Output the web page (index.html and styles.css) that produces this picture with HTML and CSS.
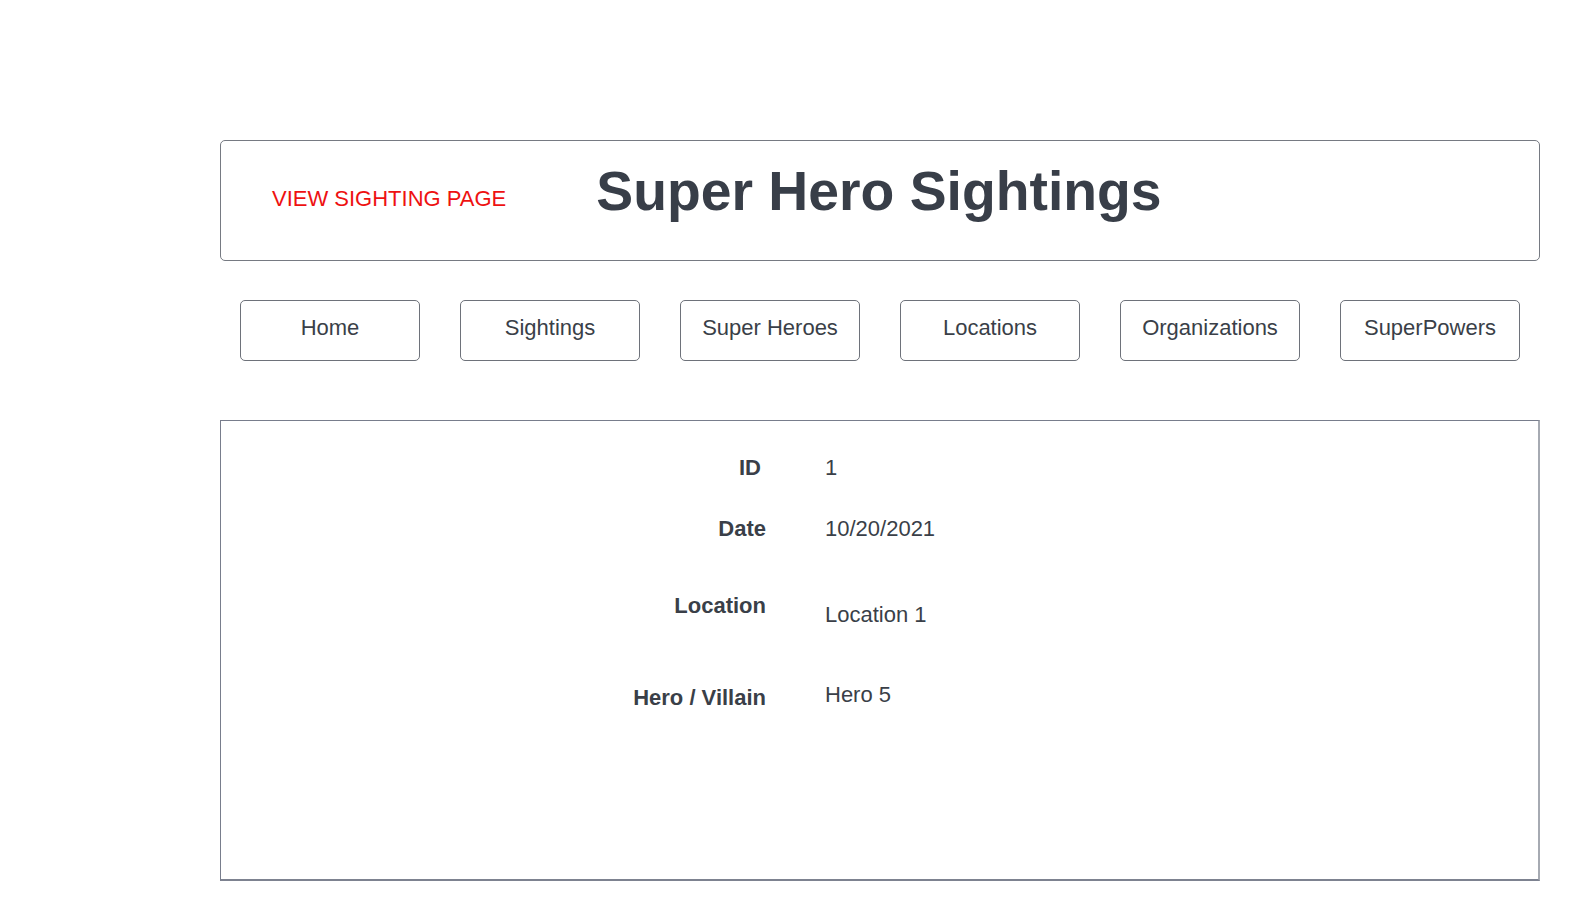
FILE: index.html
```html
<!DOCTYPE html>
<html lang="en">
<head>
<meta charset="utf-8">
<title>Super Hero Sightings</title>
<link rel="stylesheet" href="styles.css">
</head>
<body>
<div class="page">
  <header class="header">
    <div class="page-label">VIEW SIGHTING PAGE</div>
    <h1 class="title">Super Hero Sightings</h1>
  </header>
  <nav class="nav">
    <a class="nav-btn" href="#">Home</a>
    <a class="nav-btn" href="#">Sightings</a>
    <a class="nav-btn" href="#">Super Heroes</a>
    <a class="nav-btn" href="#">Locations</a>
    <a class="nav-btn" href="#">Organizations</a>
    <a class="nav-btn" href="#">SuperPowers</a>
  </nav>
  <main class="content">
    <div class="row row-id">
      <div class="label label-id">ID</div>
      <div class="value">1</div>
    </div>
    <div class="row row-date">
      <div class="label">Date</div>
      <div class="value">10/20/2021</div>
    </div>
    <div class="row row-location">
      <div class="label">Location</div>
      <div class="value value-low">Location 1</div>
    </div>
    <div class="row row-hero">
      <div class="label label-low">Hero / Villain</div>
      <div class="value">Hero 5</div>
    </div>
  </main>
</div>
</body>
</html>
```
FILE: styles.css
```css
html, body {
  margin: 0;
  padding: 0;
  background: #ffffff;
}

body {
  font-family: "Liberation Sans", Arial, sans-serif;
  color: #3a3f48;
}

.page {
  width: 1320px;
  margin-left: 220px;
  padding-top: 140px;
}

.header {
  box-sizing: border-box;
  height: 121px;
  border: 1px solid #767a82;
  border-radius: 5px;
  display: flex;
  align-items: flex-start;
  padding-left: 51px;
}

.page-label {
  font-size: 22px;
  line-height: 26px;
  color: #ee1111;
  margin-top: 45px;
}

.title {
  margin: 18px 0 0 90px;
  font-size: 55.3px;
  line-height: 64px;
  font-weight: 700;
  color: #383e48;
}

.nav {
  display: flex;
  justify-content: space-between;
  padding: 0 20px;
  margin-top: 39px;
}

.nav-btn {
  box-sizing: border-box;
  width: 180px;
  height: 61px;
  border: 1px solid #6e727a;
  border-radius: 5px;
  text-align: center;
  font-size: 22px;
  line-height: 26px;
  padding-top: 14px;
  color: #3a3f48;
  text-decoration: none;
}

.content {
  box-sizing: border-box;
  height: 461px;
  margin-top: 59px;
  border-top: 1px solid #787d8c;
  border-left: 1px solid #787d8c;
  border-bottom: 2px solid #7d8290;
  border-right: 2px solid #a6aab2;
  padding-top: 34px;
}

.row {
  display: flex;
  align-items: flex-start;
  gap: 59px;
}

.label {
  width: 545px;
  text-align: right;
  font-size: 22px;
  line-height: 26px;
  font-weight: 700;
}

.label-id {
  box-sizing: border-box;
  padding-right: 5px;
}

.value {
  font-size: 22px;
  line-height: 26px;
}

.row-date {
  margin-top: 35px;
}

.row-location {
  margin-top: 51px;
}

.value-low {
  margin-top: 9px;
}

.row-hero {
  margin-top: 54px;
}

.label-low {
  margin-top: 3px;
}
```
